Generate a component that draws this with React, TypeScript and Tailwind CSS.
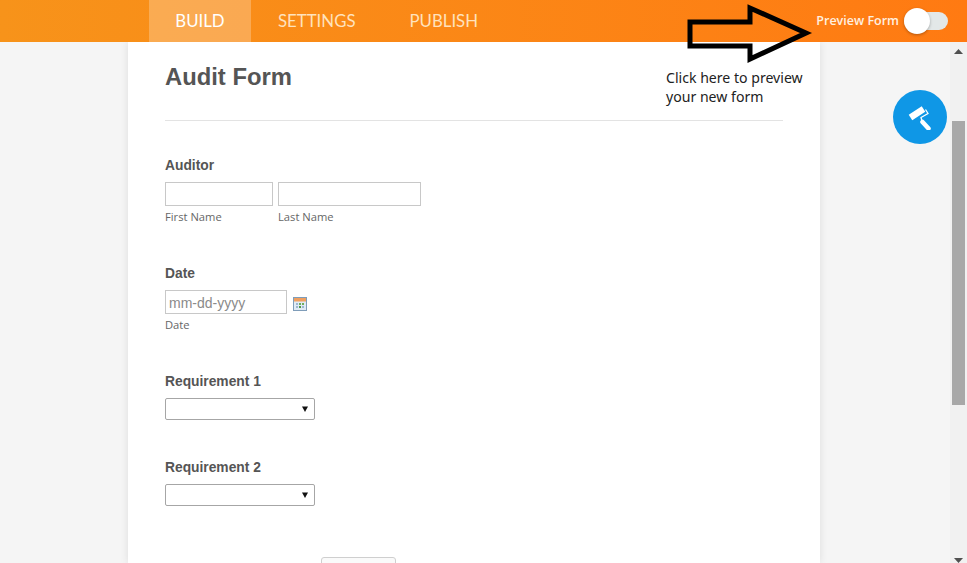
import React from "react";

const sans = "font-['Liberation_Sans',Arial,sans-serif]";

function FieldLabel({ children }: { children: React.ReactNode }) {
  return <div className={`text-[13.8px] font-bold leading-[16px] text-[#555] ${sans}`}>{children}</div>;
}

function SubLabel({ children }: { children: React.ReactNode }) {
  return <div className="mt-[4px] font-['Open_Sans',sans-serif] text-[11.2px] leading-[14px] text-[#666]">{children}</div>;
}

function SelectBox() {
  return (
    <div className="mt-[8px] flex h-[22px] w-[150px] items-center justify-end rounded-[2px] border border-[#a6a6a6] bg-white pr-[6px]">
      <svg width="6" height="6" viewBox="0 0 6 6">
        <path d="M0 0.5h6L3 6z" fill="#111" />
      </svg>
    </div>
  );
}

function CalendarIcon() {
  return (
    <svg width="14" height="14" viewBox="0 0 14 14" className="ml-[6px] mt-[4px]">
      <rect x="0.5" y="0.5" width="13" height="13" fill="#dfeaf5" stroke="#7f9db9" />
      <rect x="1" y="1" width="12" height="3.5" fill="#f0a060" />
      <rect x="3" y="6" width="2" height="2" fill="#9db7d1" />
      <rect x="6" y="6" width="2" height="2" fill="#6fae5b" />
      <rect x="9" y="6" width="2" height="2" fill="#6fae5b" />
      <rect x="3" y="9" width="2" height="2" fill="#9db7d1" />
      <rect x="6" y="9" width="2" height="2" fill="#4f9a45" />
      <rect x="9" y="9" width="2" height="2" fill="#9db7d1" />
    </svg>
  );
}

function Tab({ label, active, className }: { label: string; active?: boolean; className: string }) {
  return (
    <div
      className={`flex h-full items-center font-['Lato',sans-serif] text-[16.8px] ${
        active ? "bg-white/25 text-white" : "text-[#ffe2bd]"
      } ${className}`}
    >
      {label}
    </div>
  );
}

export default function App() {
  return (
    <div className="relative flex h-[563px] w-[967px] flex-col overflow-hidden bg-[#f5f5f5]">
      <header className="z-10 flex h-[42px] shrink-0 items-center bg-gradient-to-r from-[#f7931a] to-[#ff7a12] pl-[149px]">
        <Tab label="BUILD" active className="w-[102px] justify-center" />
        <Tab label="SETTINGS" className="ml-[27px]" />
        <Tab label="PUBLISH" className="ml-[54px]" />
        <div className="ml-auto flex items-center pr-[19px]">
          <span className="font-['Open_Sans',sans-serif] text-[12.5px] font-semibold text-[#fff0e0]">Preview Form</span>
          <div className="relative ml-[5px] h-[18px] w-[44px] rounded-full bg-[#e3e8e8]">
            <div className="absolute left-0 top-[-4px] h-[26px] w-[26px] rounded-full bg-white shadow-[0_1px_3px_rgba(0,0,0,0.3)]" />
          </div>
        </div>
      </header>

      <div className="flex min-h-0 flex-1">
        <main className="min-w-0 flex-1 overflow-hidden">
          <div className="ml-[128px] h-full w-[692px] bg-white pl-[37px] pr-[37px] shadow-[0_0_8px_rgba(0,0,0,0.1)]">
            <div className="border-b border-[#e3e3e3] pb-[29px] pt-[21px]">
              <h1 className={`text-[23.8px] font-bold leading-[28px] text-[#555] ${sans}`}>Audit Form</h1>
            </div>

            <div className="mt-[37px]">
              <FieldLabel>Auditor</FieldLabel>
              <div className="mt-[8px] flex gap-[5px]">
                <div className="w-[108px]">
                  <div className="h-[24px] border border-[#c8c8c8] bg-white" />
                  <SubLabel>First Name</SubLabel>
                </div>
                <div className="w-[143px]">
                  <div className="h-[24px] border border-[#c8c8c8] bg-white" />
                  <SubLabel>Last Name</SubLabel>
                </div>
              </div>
            </div>

            <div className="mt-[42px]">
              <FieldLabel>Date</FieldLabel>
              <div className="mt-[8px] flex items-center">
                <div className={`flex h-[24px] w-[122px] items-center border border-[#c8c8c8] pl-[3px] pt-[2px] text-[14px] text-[#8a8a8a] ${sans}`}>
                  mm-dd-yyyy
                </div>
                <CalendarIcon />
              </div>
              <SubLabel>Date</SubLabel>
            </div>

            <div className="mt-[42px]">
              <FieldLabel>Requirement 1</FieldLabel>
              <SelectBox />
            </div>

            <div className="mt-[40px]">
              <FieldLabel>Requirement 2</FieldLabel>
              <SelectBox />
            </div>

            <div className="ml-[156px] mt-[51px] h-[30px] w-[75px] rounded-[3px] border border-[#cfcfcf] bg-[#fafafa]" />
          </div>
        </main>

        <div className="relative w-[17px] shrink-0 bg-[#f1f1f1]">
          <svg width="9" height="5" viewBox="0 0 9 5" className="absolute left-[4px] top-[7px]">
            <path d="M4.5 0L9 5H0z" fill="#505050" />
          </svg>
          <div className="absolute left-[2px] top-[79px] h-[284px] w-[13px] bg-[#a8a8a8]" />
          <svg width="9" height="5" viewBox="0 0 9 5" className="absolute bottom-[0px] left-[4px]">
            <path d="M0 0H9L4.5 5z" fill="#505050" />
          </svg>
        </div>
      </div>

      {/* annotation drawn over the screenshot */}
      <svg width="130" height="62" viewBox="0 0 130 62" className="absolute left-[685px] top-[3px] z-20">
        <path d="M5 19H65V5L121 30L65 56V43H5Z" fill="none" stroke="#000" strokeWidth="5" strokeLinejoin="miter" />
      </svg>
      <div className="absolute left-[666px] top-[68px] z-20 font-['Noto_Sans',sans-serif] text-[14.1px] leading-[19px] text-[#222]">
        Click here to preview
        <br />
        your new form
      </div>

      <div className="absolute left-[893px] top-[90px] z-20 flex h-[54px] w-[54px] items-center justify-center rounded-full bg-[#0f97e6]">
        <svg width="26" height="26" viewBox="0 0 26 26" fill="none">
          <path d="M3.500 13.500L16.500 5" stroke="#fff" strokeWidth="6.500" strokeLinejoin="round" />
          <path d="M18.500 5.500L21 9.500L14 13.500L15 17" stroke="#fff" strokeWidth="1.300" />
          <path d="M15.500 18L21.500 24.500" stroke="#fff" strokeWidth="4.500" strokeLinecap="round" />
        </svg>
      </div>
    </div>
  );
}
